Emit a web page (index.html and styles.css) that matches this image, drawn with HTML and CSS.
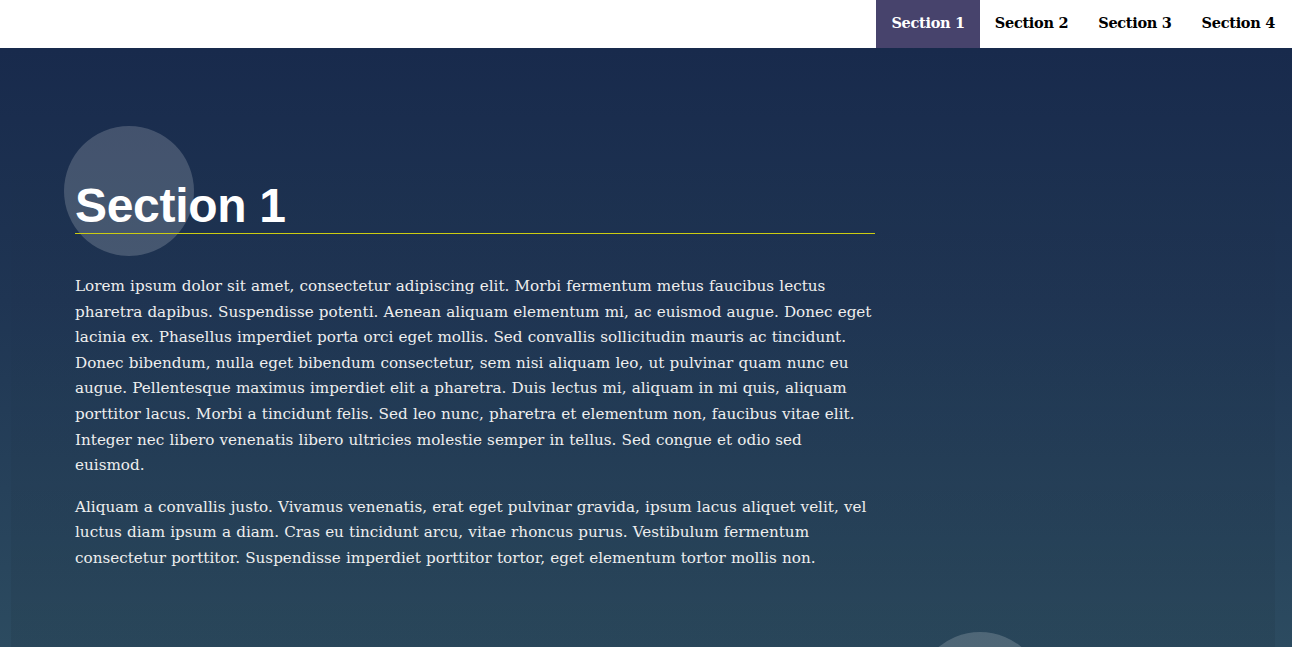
FILE: index.html
```html
<!DOCTYPE html>
<html lang="en">
<head>
<meta charset="utf-8">
<title>Landing Page</title>
<link rel="stylesheet" href="styles.css">
</head>
<body>
<header class="page-header">
  <nav class="navbar">
    <ul class="navbar-list">
      <li><a class="menu-link active" href="#section1">Section 1</a></li>
      <li><a class="menu-link" href="#section2">Section 2</a></li>
      <li><a class="menu-link" href="#section3">Section 3</a></li>
      <li><a class="menu-link" href="#section4">Section 4</a></li>
    </ul>
  </nav>
</header>
<main class="main">
  <section class="section" id="section1">
    <span class="bubble bubble-top"></span>
    <span class="bubble bubble-bottom"></span>
    <div class="landing-container">
      <h2 class="section-title">Section 1</h2>
      <p class="text">Lorem ipsum dolor sit amet, consectetur adipiscing elit. Morbi fermentum metus faucibus lectus pharetra dapibus. Suspendisse potenti. Aenean aliquam elementum mi, ac euismod augue. Donec eget lacinia ex. Phasellus imperdiet porta orci eget mollis. Sed convallis sollicitudin mauris ac tincidunt. Donec bibendum, nulla eget bibendum consectetur, sem nisi aliquam leo, ut pulvinar quam nunc eu augue. Pellentesque maximus imperdiet elit a pharetra. Duis lectus mi, aliquam in mi quis, aliquam porttitor lacus. Morbi a tincidunt felis. Sed leo nunc, pharetra et elementum non, faucibus vitae elit. Integer nec libero venenatis libero ultricies molestie semper in tellus. Sed congue et odio sed euismod.</p>
      <p class="text">Aliquam a convallis justo. Vivamus venenatis, erat eget pulvinar gravida, ipsum lacus aliquet velit, vel luctus diam ipsum a diam. Cras eu tincidunt arcu, vitae rhoncus purus. Vestibulum fermentum consectetur porttitor. Suspendisse imperdiet porttitor tortor, eget elementum tortor mollis non.</p>
    </div>
  </section>
</main>
</body>
</html>
```

FILE: styles.css
```css
html, body {
  margin: 0;
  padding: 0;
}

body {
  height: 647px;
  overflow: hidden;
  font-family: "DejaVu Serif", "Liberation Serif", serif;
  color: #fff;
  background: linear-gradient(180deg, #182a4c 48px, #1f3553 300px, #2c4b60 647px);
}

.page-header {
  background: #fff;
  height: 48px;
}

.navbar-list {
  list-style: none;
  margin: 0;
  padding: 0 2px 0 0;
  display: flex;
  justify-content: flex-end;
}

.menu-link {
  display: block;
  height: 48px;
  box-sizing: border-box;
  padding: 0 15px;
  line-height: 46px;
  font-size: 14.5px;
  font-weight: bold;
  letter-spacing: -0.3px;
  color: #000;
  text-decoration: none;
}

.menu-link.active {
  background: #47436c;
  color: #fff;
}

.main {
  margin: 26px 17px 0 11px;
  height: 600px;
  background: linear-gradient(180deg, rgba(0, 0, 0, 0) 0%, rgba(0, 0, 0, 0.02) 50%, rgba(0, 0, 0, 0.07) 100%);
}

.section {
  position: relative;
}

.bubble {
  position: absolute;
  width: 130px;
  height: 130px;
  border-radius: 50%;
  background: rgba(255, 255, 255, 0.18);
}

.bubble-top {
  left: 53px;
  top: 52px;
}

.bubble-bottom {
  left: 904px;
  top: 558px;
}

.landing-container {
  position: relative;
  max-width: 800px;
  padding: 64px;
}

.section-title {
  margin: 40px 0;
  font-family: "Liberation Sans", Arial, sans-serif;
  font-size: 48px;
  font-weight: bold;
  letter-spacing: -0.3px;
  color: #fff;
  border-bottom: 1px solid #cc1;
}

.text {
  margin: 16px 0;
  font-size: 15.2px;
  word-spacing: 0.35px;
  line-height: 25.6px;
  color: #eee;
}
```
